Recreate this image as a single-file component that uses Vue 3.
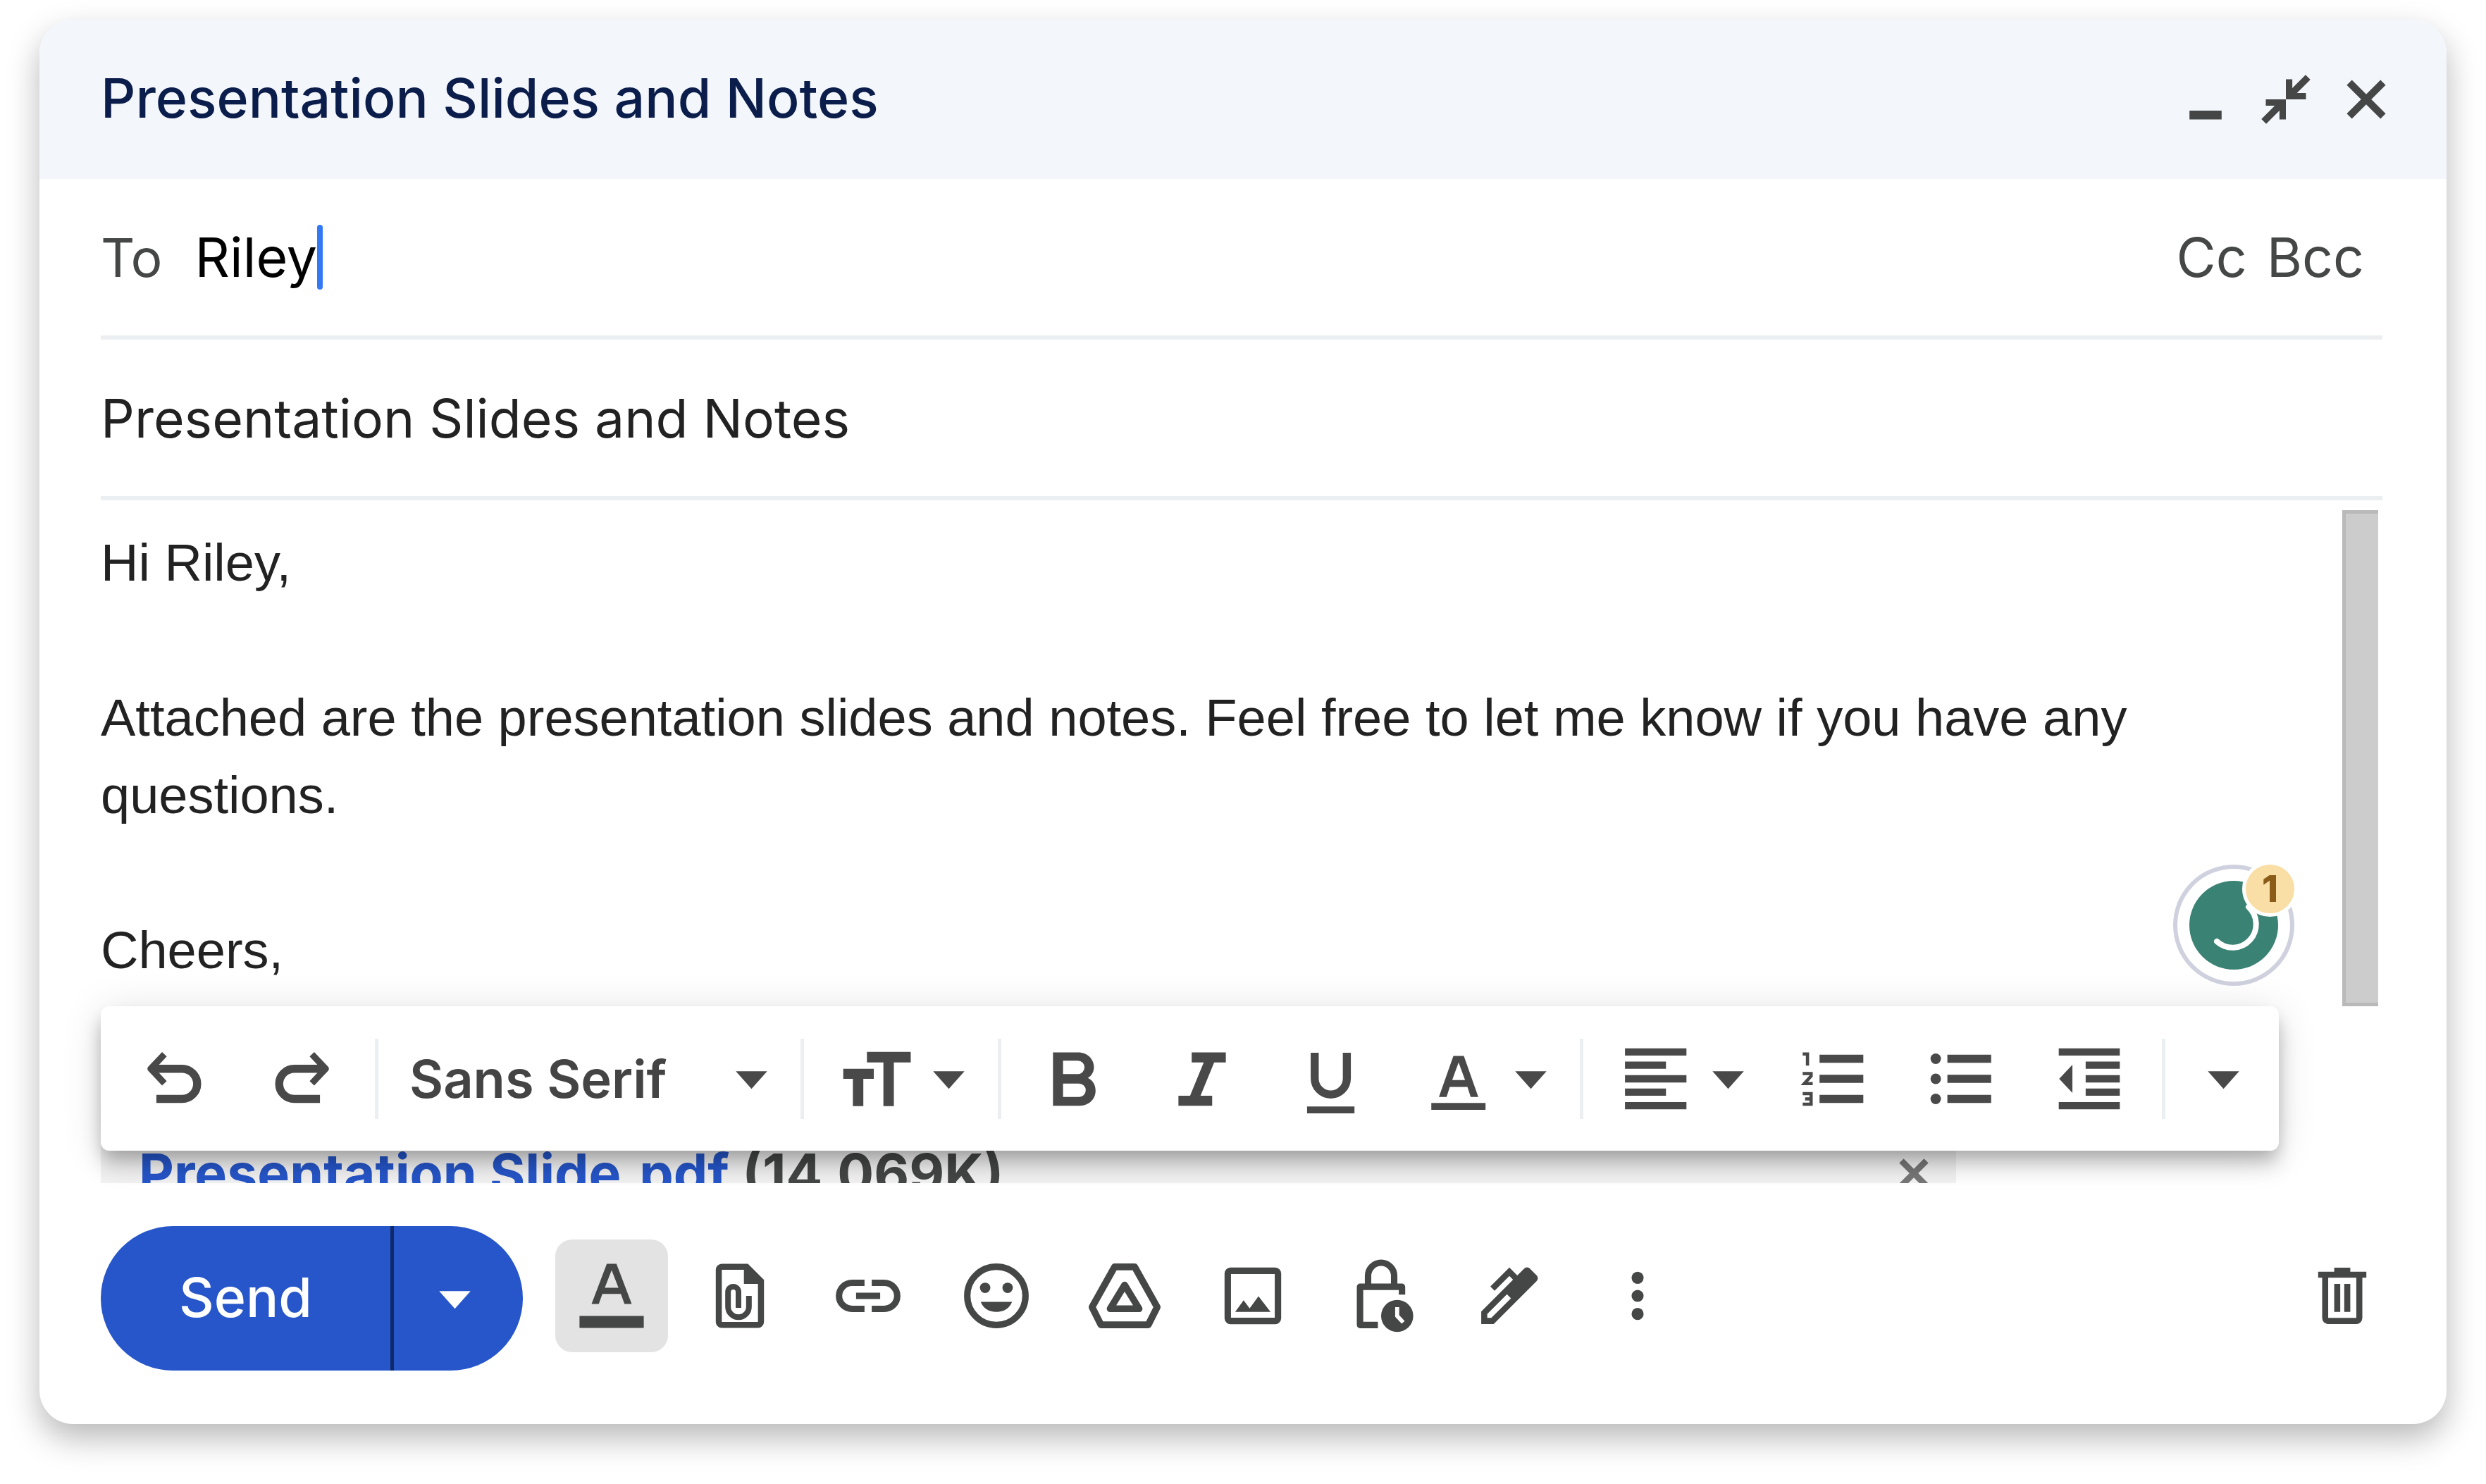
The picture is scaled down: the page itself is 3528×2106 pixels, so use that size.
<script setup>
import { ref } from 'vue'

const recipient = ref('Riley')
const subject = ref('Presentation Slides and Notes')
const message = ref(
  'Hi Riley,\n\nAttached are the presentation slides and notes. Feel free to let me know if you have any questions.\n\nCheers,'
)

const undo = '<g fill="none" stroke="currentColor"><path stroke-width="2" d="M4.6 7.5H12a3.75 3.75 0 0 1 0 7.5H5.6"/><path stroke-width="1.6" stroke-linejoin="round" d="M7.6 3.9L4.2 7.5l3.4 3.6"/></g>'

const icons = {
  minimize: '<path d="M6 12.8h8V15H6z"/>',
  collapse: '<path d="M10 5h1.6v3.4H15V10h-5zM5 10h5v5H8.4v-3.4H5z"/><path fill="none" stroke="currentColor" stroke-width="1.7" d="M10.8 9.2l4.7-4.7M9.2 10.8l-4.7 4.7"/>',
  close: '<path fill="none" stroke="currentColor" stroke-width="1.8" d="M5.8 5.8l8.4 8.4M14.2 5.8l-8.4 8.4"/>',
  undo,
  redo: `<g transform="matrix(-1 0 0 1 20 0)">${undo}</g>`,
  size: '<path d="M7.6 3.3h10.9v2.6h-4.2v10.9h-2.6V5.9H7.6zM1.7 7.5h7.6V10H6.7v6.8H4.1V10H1.7z"/>',
  bold: '<path fill-rule="evenodd" d="M4.8 3.4h6.3c2.2 0 3.9 1.6 3.9 3.7 0 1.2-.6 2.1-1.5 2.7 1.2.6 1.9 1.7 1.9 3.2 0 2.1-1.7 3.7-3.9 3.7H4.8zM7.3 5.5v3.3H11a1.65 1.65 0 0 0 0-3.3zM7.3 11.2v3.3h4a1.65 1.65 0 0 0 0-3.3z"/>',
  italic: '<path d="M7.4 3.4h8.5v2.5H13L9.6 14.2h2.9v2.5H4.1v-2.5H7l3.4-8.3h-3z"/>',
  underline: '<path fill="none" stroke="currentColor" stroke-width="2" d="M6.1 3.5v6.4a4 4 0 0 0 8 0V3.5"/><path d="M4.2 16.9H16v1.7H4.2z"/>',
  color: '<path fill-rule="evenodd" d="M8.7 4.3h2.6l3.6 10.2H13l-.8-2.5H7.8L7 14.5H5.1zM8.4 10.3h3.2L10 5.9z"/><path d="M3.2 16h13.5v1.7H3.2z"/>',
  align: '<path d="M2.3 2.4h15.3v1.8H2.3zM2.3 5.7h10.2v1.8H2.3zM2.3 9.1h15.3v1.8H2.3zM2.3 12.4h10.2v1.8H2.3zM2.3 15.8h15.3v1.8H2.3z"/>',
  numbered: '<path d="M6.7 4h10.9v2H6.7zM6.7 9h10.9v2H6.7zM6.7 14h10.9v2H6.7z"/><path fill="none" stroke="currentColor" stroke-width=".8" d="M2.5 3.8h1.2v2.9M2.5 8.7h2.1v.6l-1.7 1.9H5M2.5 13.7h2.1v2.6H2.5M3.1 15h1.5"/>',
  bulleted: '<path d="M6.6 4h10.9v2H6.6zM6.6 9h10.9v2H6.6zM6.6 14h10.9v2H6.6z"/><circle cx="3.7" cy="5" r="1.3"/><circle cx="3.7" cy="10" r="1.3"/><circle cx="3.7" cy="15" r="1.3"/>',
  outdent: '<path d="M2.4 2.4h15.2v1.8H2.4zM9.1 5.7h8.5v1.8H9.1zM9.1 9.1h8.5v1.8H9.1zM9.1 12.4h8.5v1.8H9.1zM2.4 15.8h15.2v1.8H2.4zM5.8 6.5v7L2.5 10z"/>',
  format: '<path fill-rule="evenodd" d="M8.8 2h2.4l3.8 10h-1.8l-.9-2.5H7.7L6.8 12H5zM8.3 8h3.4L10 3.6z"/><path d="M2 15h16v3H2z"/>',
  attach: '<path fill-rule="evenodd" d="M5.5 2H12l4 4v10.5a1.5 1.5 0 0 1-1.5 1.5h-9A1.5 1.5 0 0 1 4 16.5v-13A1.5 1.5 0 0 1 5.5 2zM5.5 3.5v13h9V7H11V3.5z"/><path fill="none" stroke="currentColor" stroke-width="1.4" d="M12.25 10v2.7a2.6 2.6 0 0 1-5.2 0V9a1.3 1.3 0 0 1 2.6 0v4"/>',
  link: '<path fill="none" stroke="currentColor" stroke-width="1.6" d="M9.1 6.75H6a3.25 3.25 0 0 0 0 6.5h3.1M10.9 6.75H14a3.25 3.25 0 0 1 0 6.5h-3.1M7 10h6"/>',
  emoji: '<circle cx="10" cy="10" r="7.25" fill="none" stroke="currentColor" stroke-width="1.6"/><circle cx="7.2" cy="8" r="1.3"/><circle cx="12.8" cy="8" r="1.3"/><path d="M6.1 11.5h7.8c-.6 1.6-2 2.5-3.9 2.5s-3.3-.9-3.9-2.5z"/>',
  drive: '<g fill="none" stroke="currentColor" stroke-width="1.7" stroke-linejoin="round"><path d="M7.5 2.8h5l5.6 10-2.2 4.4H4.1l-2.2-4.4z"/><path d="M10 7.3l3.6 5.9H6.4z"/></g>',
  photo: '<rect x="3.75" y="3.75" width="12.5" height="12.5" rx=".7" fill="none" stroke="currentColor" stroke-width="1.6"/><path d="M5.6 14l2.1-2.9 1.5 2 2.2-3 3 3.9z"/>',
  lock: '<path fill="none" stroke="currentColor" stroke-width="1.6" stroke-linejoin="round" d="M15.2 9.7V7.75H4.75v9.5H9.2M6.75 7.5V5a3.25 3.25 0 0 1 6.5 0v2.5"/><circle cx="14" cy="15" r="4"/><path fill="none" stroke="#fff" stroke-width="1" d="M14 12.8V15l1.5 1.6"/>',
  pen: '<path fill-rule="evenodd" d="M3 13.9L13.7 3.2a1 1 0 0 1 1.4 0l1.7 1.7a1 1 0 0 1 0 1.4L6.1 17H3zM4.5 14.5v1h1l4.9-4.9-1-1z"/><path fill="none" stroke="currentColor" stroke-width="1.5" d="M5.8 8.2L10 4l2.4 2.4"/>',
  more: '<circle cx="10" cy="5.5" r="1.5"/><circle cx="10" cy="10" r="1.5"/><circle cx="10" cy="14.5" r="1.5"/>',
  trash: '<path fill-rule="evenodd" d="M8 3h4v1h4v1.5h-1v10a1.5 1.5 0 0 1-1.5 1.5h-7A1.5 1.5 0 0 1 5 15.5v-10H4V4h4zM6.5 5.5v10h7v-10z"/><path d="M8 7h1.5v7H8zM10.5 7H12v7h-1.5z"/>'
}

const caret = '<path d="M1.1 3.2h7.8L5 7.6z"/>'

const windowActions = [
  { icon: 'minimize', label: 'Minimise' },
  { icon: 'collapse', label: 'Exit full screen' },
  { icon: 'close', label: 'Save & close' }
]

const formatGroups = [
  [{ icon: 'bold', label: 'Bold' }, { icon: 'italic', label: 'Italic' }, { icon: 'underline', label: 'Underline' }, { icon: 'color', label: 'Text colour', menu: true }],
  [{ icon: 'align', label: 'Align', menu: true }, { icon: 'numbered', label: 'Numbered list' }, { icon: 'bulleted', label: 'Bulleted list' }, { icon: 'outdent', label: 'Indent less' }]
]

const composeActions = [
  { icon: 'format', label: 'Formatting options', active: true },
  { icon: 'attach', label: 'Attach files' },
  { icon: 'link', label: 'Insert link' },
  { icon: 'emoji', label: 'Insert emoji' },
  { icon: 'drive', label: 'Insert files using Drive' },
  { icon: 'photo', label: 'Insert photo' },
  { icon: 'lock', label: 'Toggle confidential mode' },
  { icon: 'pen', label: 'Insert signature' },
  { icon: 'more', label: 'More options' }
]
</script>

<template>
  <main class="compose">
    <header class="titlebar">
      <h1>Presentation Slides and Notes</h1>
      <div class="window-actions">
        <button v-for="a in windowActions" :key="a.icon" type="button" :aria-label="a.label">
          <svg class="icon" viewBox="0 0 20 20" v-html="icons[a.icon]"></svg>
        </button>
      </div>
    </header>

    <div class="field">
      <label for="to">To</label>
      <span class="recipient">
        <span class="sizer" aria-hidden="true">{{ recipient }}</span>
        <input id="to" v-model="recipient" type="text" />
      </span>
      <span class="cursor"></span>
      <div class="copies">
        <button type="button">Cc</button>
        <button type="button">Bcc</button>
      </div>
    </div>

    <div class="field">
      <input v-model="subject" class="subject" type="text" aria-label="Subject" />
    </div>

    <section class="message">
      <textarea v-model="message" rows="6" aria-label="Message body"></textarea>
      <div class="scrollbar"></div>
      <button class="assistant" type="button" aria-label="Writing suggestions">
        <svg viewBox="0 0 172 172">
          <circle cx="86" cy="86" r="83" fill="#fff" stroke="#cfd1de" stroke-width="6" />
          <circle cx="86" cy="86" r="63" fill="#3a8274" />
          <path d="M62 109a33 33 0 0 0 45-49" fill="none" stroke="#fff" stroke-width="8" stroke-linecap="round" />
        </svg>
        <span class="count">1</span>
      </button>
    </section>

    <div class="toolbar" role="toolbar" aria-label="Formatting">
      <button type="button" aria-label="Undo"><svg class="icon" viewBox="0 0 20 20" v-html="icons.undo"></svg></button>
      <button type="button" aria-label="Redo"><svg class="icon" viewBox="0 0 20 20" v-html="icons.redo"></svg></button>
      <span class="sep"></span>
      <div class="font-picker">
        <select aria-label="Font">
          <option>Sans Serif</option>
          <option>Serif</option>
          <option>Fixed Width</option>
        </select>
        <svg class="caret" viewBox="0 0 10 10" v-html="caret"></svg>
      </div>
      <span class="sep"></span>
      <button type="button" class="with-menu" aria-label="Size">
        <svg class="icon" viewBox="0 0 20 20" v-html="icons.size"></svg>
        <svg class="caret" viewBox="0 0 10 10" v-html="caret"></svg>
      </button>
      <template v-for="(group, i) in formatGroups" :key="i">
        <span class="sep"></span>
        <button v-for="b in group" :key="b.icon" type="button" :class="{ 'with-menu': b.menu }" :aria-label="b.label">
          <svg class="icon" viewBox="0 0 20 20" v-html="icons[b.icon]"></svg>
          <svg v-if="b.menu" class="caret" viewBox="0 0 10 10" v-html="caret"></svg>
        </button>
      </template>
      <span class="sep"></span>
      <button type="button" class="overflow" aria-label="More formatting options">
        <svg class="caret" viewBox="0 0 10 10" v-html="caret"></svg>
      </button>
    </div>

    <div class="attachment">
      <p><a href="#">Presentation Slide.pdf</a> (14,069K)</p>
      <button type="button" aria-label="Remove attachment">
        <svg viewBox="0 0 10 10"><path d="M1 1l8 8M9 1l-8 8" /></svg>
      </button>
    </div>

    <footer class="actions">
      <div class="send">
        <button type="button" class="send-main">Send</button>
        <button type="button" class="send-more" aria-label="More send options">
          <svg class="caret" viewBox="0 0 10 10" v-html="caret"></svg>
        </button>
      </div>
      <div class="tools">
        <button v-for="a in composeActions" :key="a.icon" type="button" :class="{ active: a.active }" :aria-label="a.label">
          <svg class="icon" viewBox="0 0 20 20" v-html="icons[a.icon]"></svg>
        </button>
      </div>
      <button type="button" class="discard" aria-label="Discard draft">
        <svg class="icon" viewBox="0 0 20 20" v-html="icons.trash"></svg>
      </button>
    </footer>
  </main>
</template>

<style>
body {
  background: #fff;
}
</style>

<style scoped>
.compose {
  margin: 28px 56px 84px;
  padding-bottom: 76px;
  border-radius: 48px;
  background: #fff;
  box-shadow: 0 20px 46px rgba(0, 0, 0, 0.28);
  font-family: Inter, Roboto, sans-serif;
  font-size: 75px;
  color: #444746;
  display: flow-root;
}

button,
input,
select,
textarea {
  margin: 0;
  padding: 0;
  border: 0;
  background: none;
  font: inherit;
  color: inherit;
  outline: none;
}

button {
  display: flex;
  align-items: center;
  justify-content: center;
  flex: none;
  cursor: pointer;
}

svg {
  display: block;
  flex: none;
  fill: currentColor;
}

.icon {
  width: 114px;
  height: 114px;
}

.caret {
  width: 57px;
  height: 57px;
}

.titlebar {
  display: flex;
  align-items: center;
  justify-content: space-between;
  height: 226px;
  padding: 0 57px 0 87px;
  border-radius: 48px 48px 0 0;
  background: #f3f6fb;
}

h1 {
  margin: 0;
  padding-bottom: 4px;
  font-size: 77px;
  font-weight: 500;
  color: #0b1d4b;
}

.window-actions {
  display: flex;
}

.field {
  display: flex;
  align-items: center;
  height: 222px;
  margin: 0 91px 0 87px;
  border-bottom: 6px solid #eceff1;
}

.recipient {
  display: grid;
  margin-left: 46px;
  font-size: 77px;
  color: #000;
}

.recipient > * {
  grid-area: 1 / 1;
}

.recipient input {
  width: 0;
  min-width: 100%;
}

.sizer {
  visibility: hidden;
}

.cursor {
  width: 8px;
  height: 92px;
  border-radius: 4px;
  background: #3478f6;
}

.copies {
  display: flex;
  gap: 28px;
  margin-left: auto;
  padding-right: 26px;
  font-size: 77px;
}

.subject {
  flex: 1;
  color: #222;
}

.message {
  position: relative;
  display: flex;
  margin: 0 97px 0 87px;
  padding-top: 14px;
}

textarea {
  flex: 1;
  padding-top: 20px;
  resize: none;
  overflow: hidden;
  font-family: "Liberation Sans", Arial, sans-serif;
  font-size: 74px;
  line-height: 110px;
  color: #222;
}

.scrollbar {
  box-sizing: border-box;
  width: 51px;
  min-height: 704px;
  border: solid #b9b9b9;
  border-width: 5px 0 5px 5px;
  background: #ccc;
}

.assistant {
  position: absolute;
  right: 119px;
  bottom: 29px;
}

.assistant svg {
  width: 172px;
  height: 172px;
}

.count {
  position: absolute;
  top: -5px;
  right: -5px;
  width: 69px;
  border: 5px solid #fff;
  border-radius: 50%;
  background: #f9dea5;
  font-size: 52px;
  font-weight: 800;
  line-height: 69px;
  text-align: center;
  color: #8a5c18;
}

.toolbar {
  position: relative;
  display: flex;
  align-items: center;
  width: max-content;
  height: 205px;
  margin-left: 87px;
  padding: 0 9px 0 13px;
  box-sizing: border-box;
  border-radius: 12px;
  background: #fff;
  color: #494949;
  box-shadow:
    0 11px 23px -6px rgba(0, 0, 0, 0.2),
    0 23px 28px rgba(0, 0, 0, 0.14),
    0 6px 57px rgba(0, 0, 0, 0.12);
}

.toolbar button {
  width: 182px;
  height: 160px;
}

.toolbar .with-menu {
  justify-content: flex-start;
  gap: 17px;
  width: 251px;
  padding-left: 34px;
}

.toolbar .overflow {
  width: 140px;
}

.sep {
  width: 5px;
  height: 114px;
  margin: 0 12px;
  background: #eceff1;
}

.font-picker {
  display: flex;
  align-items: center;
  width: 575px;
}

.font-picker select {
  width: 489px;
  padding-left: 32px;
  appearance: none;
  font-size: 74px;
  font-weight: 600;
  color: #444;
}

.attachment {
  display: flex;
  align-items: flex-start;
  justify-content: space-between;
  width: 2633px;
  max-width: 80%;
  height: 86px;
  margin: -40px 0 0 87px;
  padding: 0 38px 0 54px;
  box-sizing: border-box;
  overflow: hidden;
  background: #f2f2f2;
  font-size: 77px;
  font-weight: 700;
}

.attachment p {
  margin: 0;
  line-height: 144px;
}

.attachment a {
  color: #2656c9;
  text-decoration: none;
}

.attachment button {
  margin-top: 50px;
  color: #777;
}

.attachment svg {
  width: 44px;
  height: 44px;
  fill: none;
  stroke: currentColor;
  stroke-width: 2;
}

.actions {
  display: flex;
  align-items: flex-start;
  margin: 61px 68px 0 87px;
}

.send {
  display: flex;
  height: 205px;
  margin-right: 46px;
  border-radius: 103px;
  overflow: hidden;
  background: #2656c9;
  color: #fff;
  font-size: 77px;
  font-weight: 500;
}

.send-main {
  width: 411px;
  padding-bottom: 4px;
}

.send-more {
  width: 188px;
  padding-right: 10px;
  border-left: 5px solid #10296b;
}

.tools {
  display: flex;
  gap: 22px;
  margin-top: 19px;
}

.tools button,
.discard {
  width: 160px;
  height: 160px;
  border-radius: 24px;
}

.tools .active {
  background: #e3e3e3;
}

.discard {
  margin: 19px 0 0 auto;
}
</style>
